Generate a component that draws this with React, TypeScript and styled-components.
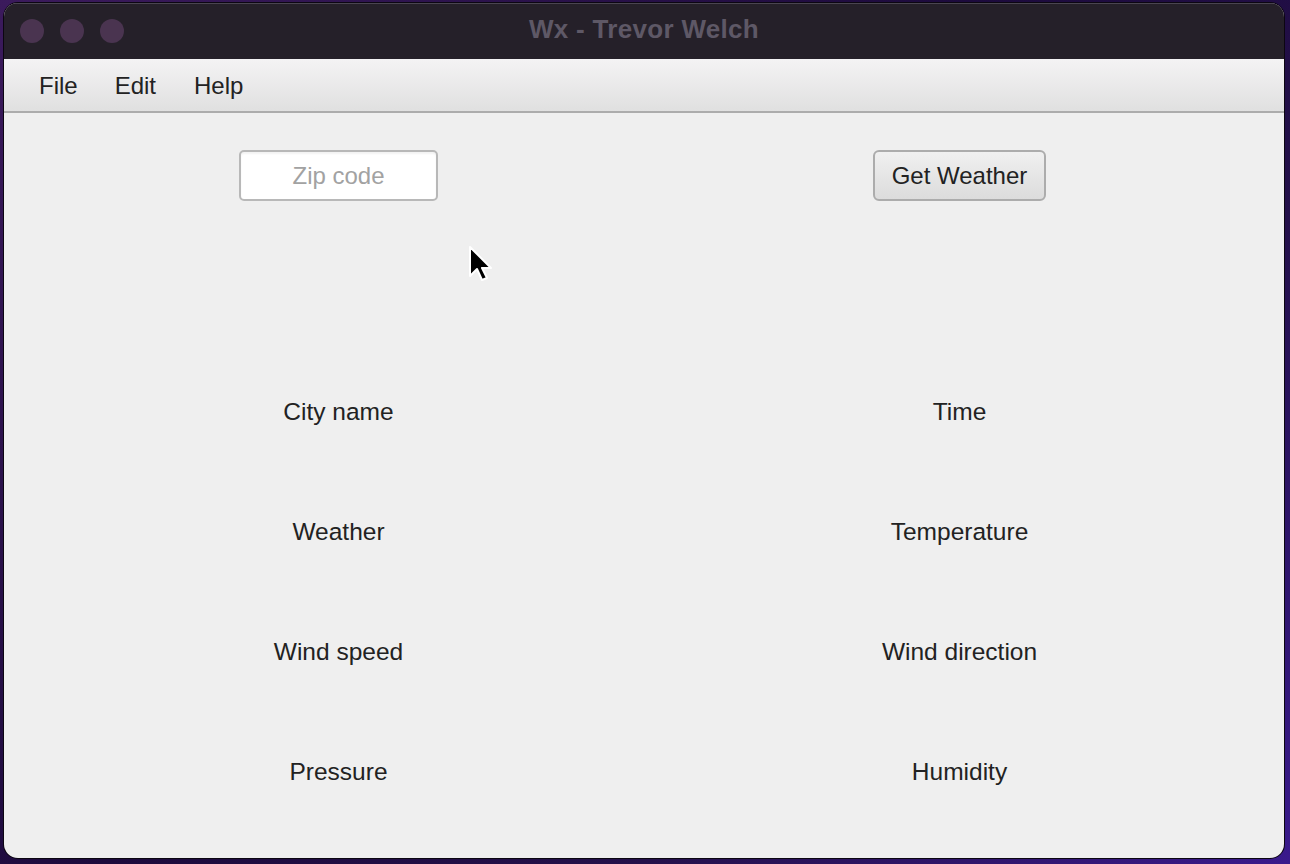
import React from "react";
import styled, { createGlobalStyle } from "styled-components";

const Global = createGlobalStyle`
  html, body { margin: 0; padding: 0; }
  body {
    width: 1290px;
    height: 864px;
    overflow: hidden;
    background: linear-gradient(135deg, #3b1a5c 0%, #1c0a3c 45%, #24104a 70%, #3a1a8c 100%);
    font-family: "Liberation Sans", Arial, sans-serif;
  }
`;

const Desktop = styled.div`
  width: 1290px;
  height: 864px;
  padding: 3px 6px 6px 4px;
  box-sizing: border-box;
  position: relative;
`;

const Window = styled.div`
  width: 1280px;
  height: 855px;
  border-radius: 14px;
  overflow: hidden;
  background: #efefef;
  display: flex;
  flex-direction: column;
  box-shadow: 0 0 0 1px #0c0612;
`;

const TitleBar = styled.div`
  height: 56px;
  flex: none;
  background: #252029;
  border-top: 1px solid #4a4550;
  box-sizing: border-box;
  position: relative;
  display: flex;
  align-items: center;
  justify-content: center;
  padding-bottom: 4px;
`;

const Lights = styled.div`
  position: absolute;
  left: 16px;
  top: 15px;
  display: flex;
  gap: 16px;
`;

const Light = styled.span`
  width: 24px;
  height: 24px;
  border-radius: 50%;
  background: #4a3450;
`;

const Title = styled.div`
  color: #5e5866;
  font-weight: bold;
  font-size: 26px;
  letter-spacing: 0.3px;
`;

const MenuBar = styled.div`
  height: 54px;
  flex: none;
  background: linear-gradient(#f4f3f4, #e0e0e0);
  border-bottom: 2px solid #acacac;
  box-sizing: border-box;
  display: flex;
  align-items: center;
  padding: 2px 0 0 31px;
`;

const MenuItem = styled.span<{ gap: number }>`
  font-size: 24px;
  color: #222;
  padding: 0 4px;
  margin-right: ${(p) => p.gap}px;
`;

const Content = styled.div`
  flex: 1;
  display: grid;
  grid-template-columns: 621px 621px;
  grid-template-rows: 125px 114px repeat(4, 120px);
  padding-left: 24px;
`;

const Cell = styled.div`
  display: flex;
  align-items: center;
  justify-content: center;
`;

const Spacer = styled.div`
  grid-column: 1 / span 2;
`;

const ZipInput = styled.div`
  width: 199px;
  height: 51px;
  box-sizing: border-box;
  border: 2px solid #b8b8b8;
  border-radius: 5px;
  background: #fff;
  color: #a2a2a2;
  font-size: 24px;
  display: flex;
  align-items: center;
  justify-content: center;
  box-shadow: inset 0 2px 2px rgba(0,0,0,0.05);
`;

const Button = styled.div`
  width: 173px;
  height: 51px;
  box-sizing: border-box;
  border: 2px solid #acacac;
  border-radius: 6px;
  background: linear-gradient(#f0f0f0, #dcdcdc);
  color: #222;
  font-size: 24px;
  display: flex;
  align-items: center;
  justify-content: center;
`;

const Label = styled.span`
  font-size: 24.5px;
  color: #222;
`;

const Cursor = styled.svg`
  position: absolute;
  left: 466px;
  top: 244px;
`;

const labels = [
  ["City name", "Time"],
  ["Weather", "Temperature"],
  ["Wind speed", "Wind direction"],
  ["Pressure", "Humidity"],
];

export default function App() {
  return (
    <>
      <Global />
      <Desktop>
        <Window>
          <TitleBar>
            <Lights>
              <Light />
              <Light />
              <Light />
            </Lights>
            <Title>Wx - Trevor Welch</Title>
          </TitleBar>
          <MenuBar>
            <MenuItem gap={29}>File</MenuItem>
            <MenuItem gap={30}>Edit</MenuItem>
            <MenuItem gap={0}>Help</MenuItem>
          </MenuBar>
          <Content>
            <Cell>
              <ZipInput>Zip code</ZipInput>
            </Cell>
            <Cell>
              <Button>Get Weather</Button>
            </Cell>
            <Spacer />
            {labels.map(([a, b]) => (
              <React.Fragment key={a}>
                <Cell>
                  <Label>{a}</Label>
                </Cell>
                <Cell>
                  <Label>{b}</Label>
                </Cell>
              </React.Fragment>
            ))}
          </Content>
        </Window>
        <Cursor width="28" height="42" viewBox="0 0 28 42">
          <path
            d="M4 3 L4 32 L11 25 L16 36 L21 34 L16 24 L25 24 Z"
            fill="#000"
            stroke="#fff"
            strokeWidth="2"
            strokeLinejoin="round"
          />
        </Cursor>
      </Desktop>
    </>
  );
}
